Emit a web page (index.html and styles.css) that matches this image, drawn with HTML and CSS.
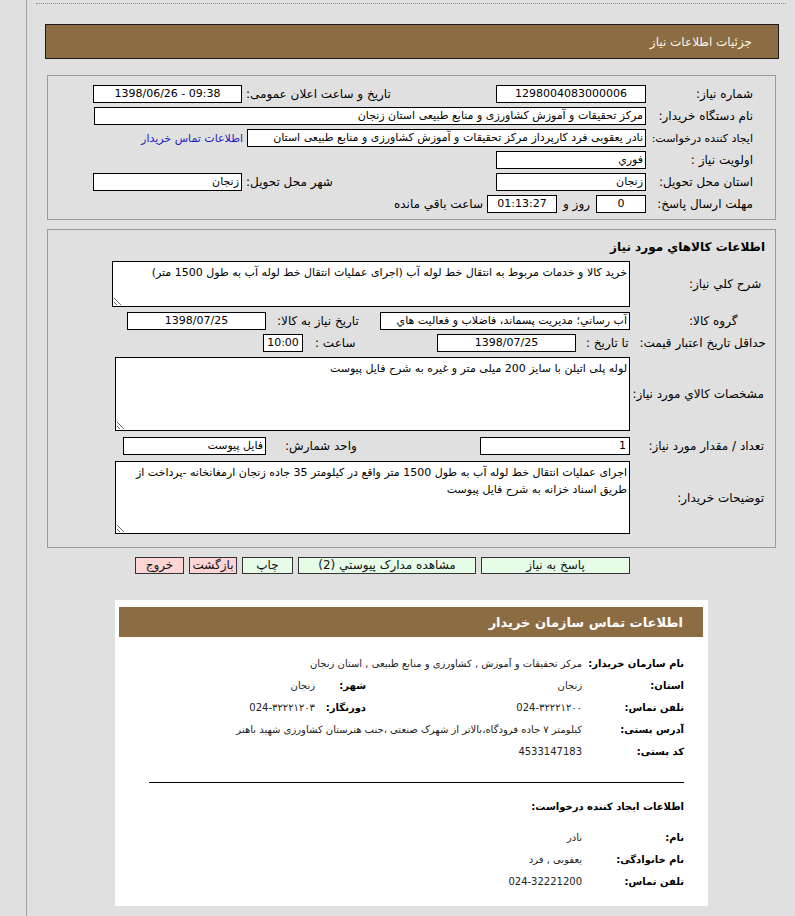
FILE: index.html
```html
<!DOCTYPE html>
<html lang="fa">
<head>
<meta charset="utf-8">
<title>جزئیات اطلاعات نیاز</title>
<link rel="stylesheet" href="styles.css">
</head>
<body>
<div class="frame">
  <div class="dots"></div>
  <div class="titlebar" dir="rtl">جزئیات اطلاعات نیاز</div>

  <div class="panel p1" dir="rtl">
    <div class="row">
      <span class="lbl">شماره نیاز:</span>
      <span class="box w150 c" dir="ltr">1298004083000006</span>
      <span class="lbl2">تاریخ و ساعت اعلان عمومی:</span>
      <span class="box w149 c" dir="ltr">1398/06/26 - 09:38</span>
    </div>
    <div class="row">
      <span class="lbl">نام دستگاه خریدار:</span>
      <span class="box w552">مرکز تحقیقات و آموزش کشاورزی و منابع طبیعی استان زنجان</span>
    </div>
    <div class="row">
      <span class="lbl sm">ایجاد کننده درخواست:</span>
      <span class="box w399 clip">نادر یعقوبی فرد کارپرداز مرکز تحقیقات و آموزش کشاورزی و منابع طبیعی استان</span>
      <a class="link" href="#">اطلاعات تماس خریدار</a>
    </div>
    <div class="row">
      <span class="lbl">اولویت نیاز :</span>
      <span class="box w150">فوري</span>
    </div>
    <div class="row">
      <span class="lbl">استان محل تحویل:</span>
      <span class="box w150">زنجان</span>
      <span class="lbl2">شهر محل تحویل:</span>
      <span class="box w149">زنجان</span>
    </div>
    <div class="row">
      <span class="lbl">مهلت ارسال پاسخ:</span>
      <span class="box w50 c">0</span>
      <span class="mid">روز و</span>
      <span class="box w70 c" dir="ltr">01:13:27</span>
      <span class="after">ساعت باقي مانده</span>
    </div>
  </div>

  <div class="panel p2" dir="rtl">
    <div class="ptitle">اطلاعات کالاهاي مورد نیاز</div>
    <div class="row2 ra">
      <span class="lab lab-l">شرح کلي نیاز:</span>
      <textarea class="ta ta1" readonly>خرید کالا و خدمات مربوط به انتقال خط لوله آب (اجرای عملیات انتقال خط لوله آب به طول 1500 متر)</textarea>
    </div>
    <div class="row2 rb">
      <span class="lab lab-l">گروه کالا:</span>
      <span class="box w250 clip">آب رساني؛ مديريت پسماند، فاضلاب و فعاليت هاي</span>
      <span class="labB">تاریخ نیاز به کالا:</span>
      <span class="box w139 c" dir="ltr">1398/07/25</span>
    </div>
    <div class="row2 rc">
      <span class="labC"><span>حداقل تاریخ اعتبار قیمت:</span><span>تا تاریخ :</span></span>
      <span class="box w139 c" dir="ltr">1398/07/25</span>
      <span class="labT">ساعت :</span>
      <span class="box w40 c" dir="ltr">10:00</span>
    </div>
    <div class="row2 rd">
      <span class="lab">مشخصات کالاي مورد نیاز:</span>
      <textarea class="ta ta2" readonly>لوله پلی اتیلن با سایز 200 میلی متر و غیره به شرح فایل پیوست</textarea>
    </div>
    <div class="row2 re">
      <span class="lab">تعداد / مقدار مورد نیاز:</span>
      <span class="box w150 num">1</span>
      <span class="labE">واحد شمارش:</span>
      <span class="box w143">فایل پیوست</span>
    </div>
    <div class="row2 rf">
      <span class="lab">توضیحات خریدار:</span>
      <textarea class="ta ta3" readonly>اجرای عملیات انتقال خط لوله آب به طول 1500 متر واقع در کیلومتر 35 جاده زنجان ارمغانخانه -پرداخت از طریق اسناد خزانه به شرح فایل پیوست</textarea>
    </div>
  </div>

  <div class="buttons" dir="rtl">
    <span class="btn green b1">پاسخ به نیاز</span>
    <span class="btn green b2">مشاهده مدارک پیوستي (2)</span>
    <span class="btn green b3">چاپ</span>
    <span class="btn pink b4">بازگشت</span>
    <span class="btn pink b5">خروج</span>
  </div>

  <div class="card" dir="rtl">
    <div class="card-head">اطلاعات تماس سازمان خریدار</div>
    <div class="card-body">
      <div class="crow first">
        <span class="clab">نام سازمان خریدار:</span>
        <span class="cval">مرکز تحقیقات و آموزش , کشاورزی و منابع طبیعی , استان زنجان</span>
      </div>
      <div class="crow">
        <span class="clab">استان:</span>
        <span class="cval v1">زنجان</span>
        <span class="clab2">شهر:</span>
        <span class="cval">زنجان</span>
      </div>
      <div class="crow">
        <span class="clab">تلفن تماس:</span>
        <span class="cval v1"><bdi dir="ltr">024-۳۲۲۲۱۲۰۰</bdi></span>
        <span class="clab2">دورنگار:</span>
        <span class="cval"><bdi dir="ltr">024-۳۲۲۲۱۲۰۳</bdi></span>
      </div>
      <div class="crow">
        <span class="clab">آدرس پستی:</span>
        <span class="cval">کیلومتر ۷ جاده فرودگاه،بالاتر از شهرک صنعتی ،جنب هنرستان کشاورزی شهید باهنر</span>
      </div>
      <div class="crow">
        <span class="clab">کد پستی:</span>
        <span class="cval">4533147183</span>
      </div>
      <hr class="sep">
      <div class="csub">اطلاعات ایجاد کننده درخواست:</div>
      <div class="crow first2">
        <span class="clab">نام:</span>
        <span class="cval">نادر</span>
      </div>
      <div class="crow">
        <span class="clab">نام خانوادگی:</span>
        <span class="cval">یعقوبی , فرد</span>
      </div>
      <div class="crow">
        <span class="clab">تلفن تماس:</span>
        <span class="cval">024-32221200</span>
      </div>
    </div>
  </div>
</div>
</body>
</html>
```

FILE: styles.css
```css
* { box-sizing: border-box; }
html, body { margin: 0; padding: 0; }
body {
  background: #e0e0e0;
  font-family: "DejaVu Sans", sans-serif;
  font-size: 12px;
  color: #000;
  width: 795px;
  min-height: 916px;
  overflow: hidden;
}
.frame {
  margin-left: 26px;
  border-left: 1px solid #a3a3a3;
  min-height: 916px;
  padding-top: 3px;
  padding-bottom: 10px;
}
.dots {
  margin: 0 9px;
  border-top: 1px dotted #8a8a8a;
}
.titlebar {
  margin: 20px 16px 0 18px;
  height: 35px;
  border: 1px solid #1a1a1a;
  background: #8c6d43;
  color: #fbf6ea;
  display: flex;
  align-items: center;
  padding-right: 26px;
  font-size: 12px;
}
.panel {
  margin: 16px 19px 0 20px;
  border: 1px solid #9a9a9a;
}
.p1 { padding: 9px 22px 6px 0; }
.p2 { margin-top: 9px; padding: 0 9px 13px 0; }

.row {
  display: flex;
  align-items: center;
  height: 18px;
  margin-bottom: 4px;
  white-space: nowrap;
}
.row:last-child { margin-bottom: 0; }
.lbl { width: 107px; flex: none; }
.lbl.sm { font-size: 11px; }
.lbl2 { width: 254px; flex: none; text-align: left; padding-left: 4px; }
.box {
  flex: none;
  display: block;
  height: 18px;
  border: 1px solid #000;
  background: #fff;
  line-height: 16px;
  font-size: 11px;
  padding: 0 2px;
  white-space: nowrap;
  overflow: hidden;
}
.c { text-align: center; }
.num { direction: ltr; padding: 0 3px; text-align: right; }
.w40 { width: 40px; }
.w50 { width: 50px; }
.w70 { width: 70px; }
.w139 { width: 139px; }
.w143 { width: 143px; }
.w149 { width: 149px; }
.w150 { width: 150px; }
.w250 { width: 250px; }
.w399 { width: 399px; }
.w552 { width: 552px; }
.link { color: #1c1cbf; text-decoration: none; margin-right: 4px; font-size: 11px; }
.mid { width: 39px; flex: none; text-align: center; }
.after { margin-right: 4px; }

.ptitle {
  font-weight: bold;
  padding: 8px 1px 0 0;
  line-height: 18px;
  margin-bottom: 5px;
}
.row2 { display: flex; align-items: center; white-space: nowrap; }
.lab { width: 136px; flex: none; text-align: right; padding-right: 2px; }
.lab-l { text-align: left; padding-left: 59px; padding-right: 0; }
.ra { margin-bottom: 5px; }
.rb { height: 18px; margin-bottom: 4px; }
.rc { height: 18px; margin-bottom: 5px; }
.rd { margin-bottom: 6px; }
.re { height: 18px; margin-bottom: 6px; }
.labB { width: 114px; flex: none; text-align: left; padding-left: 11px; }
.labC {
  width: 190px;
  flex: none;
  display: flex;
  justify-content: space-between;
  padding-left: 10px;
}
.labT { width: 134px; flex: none; text-align: left; padding-left: 12px; }
.labE { width: 214px; flex: none; text-align: left; padding-left: 19px; }
.ta {
  flex: none;
  display: block;
  border: 1px solid #000;
  background: #fff;
  font-family: "DejaVu Sans", sans-serif;
  font-size: 11px;
  line-height: 17px;
  padding: 2px 2px;
  margin: 0;
  color: #000;
  white-space: pre-wrap;
  overflow: hidden;
  resize: both;
}
.ta1 { width: 518px; height: 46px; }
.ta2 { width: 515px; height: 74px; }
.ta3 { width: 515px; height: 73px; }

.buttons {
  display: flex;
  gap: 5px;
  margin-top: 9px;
  padding-right: 165px;
}
.btn {
  flex: none;
  height: 17px;
  border: 1px solid #333;
  line-height: 15px;
  text-align: center;
  font-size: 12px;
  color: #111;
}
.green { background: #e6fce6; }
.pink { background: #fdd5d5; }
.b1 { width: 149px; }
.b2 { width: 178px; }
.b3 { width: 51px; }
.b4 { width: 48px; }
.b5 { width: 49px; }

.card {
  margin: 26px 0 0 88px;
  width: 593px;
  height: 306px;
  background: #fff;
  padding: 7px 5px 0 4px;
}
.card-head {
  height: 30px;
  background: #8c6d43;
  color: #fff;
  font-weight: bold;
  font-size: 13px;
  display: flex;
  align-items: center;
  padding-right: 20px;
}
.card-body { padding-right: 19px; }
.crow {
  display: flex;
  align-items: center;
  height: 22px;
  white-space: nowrap;
}
.crow.first { margin-top: 15px; }
.crow.first2 { margin-top: 8px; }
.clab { width: 102px; flex: none; font-weight: bold; font-size: 10px; }
.clab2 { width: 51px; flex: none; font-weight: bold; font-size: 10px; }
.cval { font-size: 10px; color: #222; }
.v1 { width: 216px; flex: none; }
.sep {
  border: 0;
  border-top: 1px solid #000;
  margin: 20px 0 0 10px;
  height: 0;
  width: 535px;
}
.csub {
  font-weight: bold;
  font-size: 10px;
  line-height: 22px;
  margin-top: 13px;
}
```
